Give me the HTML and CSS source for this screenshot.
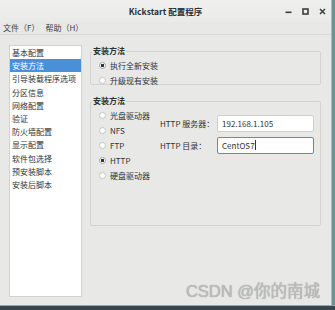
FILE: index.html
```html
<!DOCTYPE html>
<html lang="zh-CN">
<head>
<meta charset="utf-8">
<title>Kickstart 配置程序</title>
<link rel="stylesheet" href="styles.css">
</head>
<body>
<div class="desktop">
  <div class="window">
    <header class="titlebar">
      <span class="title">Kickstart 配置程序</span>
      <div class="controls">
        <span class="ctl"><svg width="7" height="7" viewBox="0 0 7 7"><rect x="0.5" y="3.5" width="6" height="1.6" fill="#3b3f41"/></svg></span>
        <span class="ctl"><svg width="7" height="7" viewBox="0 0 7 7"><rect x="1" y="1" width="5" height="5" fill="none" stroke="#3b3f41" stroke-width="1.6"/></svg></span>
        <span class="ctl"><svg width="7" height="7" viewBox="0 0 7 7"><path d="M1 1L6 6M6 1L1 6" stroke="#3b3f41" stroke-width="1.5"/></svg></span>
      </div>
    </header>
    <nav class="menubar">
      <span>文件（F）</span>
      <span>帮助（H）</span>
    </nav>
    <div class="content">
      <ul class="sidebar">
        <li>基本配置</li>
        <li class="selected">安装方法</li>
        <li>引导装载程序选项</li>
        <li>分区信息</li>
        <li>网络配置</li>
        <li>验证</li>
        <li>防火墙配置</li>
        <li>显示配置</li>
        <li>软件包选择</li>
        <li>预安装脚本</li>
        <li>安装后脚本</li>
      </ul>
      <div class="main">
        <fieldset class="frame frame-method">
          <legend>安装方法</legend>
          <div class="options">
            <div class="radio"><span class="mark checked"></span>执行全新安装</div>
            <div class="radio"><span class="mark"></span>升级现有安装</div>
          </div>
        </fieldset>
        <fieldset class="frame frame-source">
          <legend>安装方法</legend>
          <div class="source-body">
            <div class="radio-list">
              <div class="radio"><span class="mark"></span>光盘驱动器</div>
              <div class="radio"><span class="mark"></span>NFS</div>
              <div class="radio"><span class="mark"></span>FTP</div>
              <div class="radio"><span class="mark checked"></span>HTTP</div>
              <div class="radio"><span class="mark"></span>硬盘驱动器</div>
            </div>
            <div class="http-form">
              <span class="label">HTTP 服务器：</span>
              <span class="field">192.168.1.105</span>
              <span class="label">HTTP 目录：</span>
              <span class="field focused">CentOS7<span class="caret"></span></span>
            </div>
          </div>
        </fieldset>
      </div>
    </div>
    <div class="watermark">CSDN @你的南城</div>
  </div>
  <div class="edge-right"></div>
  <div class="taskbar"></div>
</div>
</body>
</html>
```

FILE: styles.css
```css
html, body {
  margin: 0;
  padding: 0;
}
body {
  width: 335px;
  height: 310px;
  overflow: hidden;
  font-family: "Noto Sans CJK SC", "Noto Sans", sans-serif;
  color: #2e3436;
}
.desktop {
  display: grid;
  grid-template-columns: 331px 4px;
  grid-template-rows: 305px 5px;
  width: 335px;
  height: 310px;
  background: #3b4a52;
}
.window {
  grid-column: 1;
  grid-row: 1;
  position: relative;
  display: flex;
  flex-direction: column;
  background: #e8e8e7;
  overflow: hidden;
}
.edge-right {
  grid-column: 2;
  grid-row: 1;
  background: #6b9393;
  border-left: 1px solid #a9bcbc;
}
.taskbar {
  grid-column: 1 / 3;
  grid-row: 2;
  background: #37464e;
  border-top: 1px solid #9aa5a9;
}

/* title bar */
.titlebar {
  height: 22px;
  flex: none;
  display: grid;
  grid-template-columns: 1fr auto 1fr;
  align-items: center;
  background: linear-gradient(#efefee, #eaeae9);
}
.title {
  grid-column: 2;
  font-size: 8.5px;
  font-weight: 700;
  line-height: 22px;
  color: #2e3436;
}
.controls {
  grid-column: 3;
  justify-self: end;
  display: flex;
}
.ctl {
  width: 17px;
  height: 22px;
  display: flex;
  align-items: center;
  justify-content: center;
}

/* menu */
.menubar {
  height: 13px;
  flex: none;
  box-sizing: border-box;
  display: flex;
  gap: 6px;
  padding-left: 3px;
  font-size: 8px;
  line-height: 12px;
  color: #3a3f41;
  border-bottom: 1px solid #dadad8;
  background: #e8e8e7;
}

/* content */
.content {
  flex: 1;
  display: flex;
  gap: 8px;
  padding: 10px 10px 8px 9px;
}
.sidebar {
  width: 73px;
  height: 252px;
  flex: none;
  box-sizing: border-box;
  margin: 0;
  padding: 0;
  list-style: none;
  background: #ffffff;
  border: 1px solid #d2d2cf;
  font-size: 8px;
  line-height: 13.2px;
  color: #2e3436;
}
.sidebar li {
  padding-left: 2px;
  white-space: nowrap;
}
.sidebar li.selected {
  background: #4a90d9;
  color: #ffffff;
}

.main {
  flex: 1;
  margin-top: 1px;
  display: flex;
  flex-direction: column;
  gap: 11px;
}
.frame {
  margin: 0;
  padding: 0;
  min-width: 0;
  box-sizing: border-box;
  border: 1px solid #d2d2cf;
  border-radius: 2px;
}
.frame legend {
  margin-left: 1px;
  padding: 0 1px;
  font-size: 8px;
  font-weight: 700;
  line-height: 10px;
  color: #2e3436;
}
.frame-method {
  height: 39px;
}
.frame-source {
  height: 130px;
}
.options {
  padding: 1.5px 0 0 8px;
}
.radio {
  display: flex;
  align-items: center;
  gap: 4px;
  height: 15px;
  font-size: 8px;
  color: #2e3436;
  white-space: nowrap;
}
.mark {
  width: 7px;
  height: 7px;
  flex: none;
  box-sizing: border-box;
  border-radius: 50%;
  border: 1px solid #c3c3c0;
  background: #ffffff;
}
.mark.checked {
  border-color: #a4a4a1;
  background: radial-gradient(circle, #2e3436 0 1.4px, #ffffff 1.9px);
}

.source-body {
  display: flex;
  padding: 1.5px 0 0 8px;
}
.radio-list {
  width: 61px;
  flex: none;
}
.http-form {
  display: grid;
  grid-template-columns: 57px 97px;
  grid-auto-rows: 17px;
  row-gap: 5px;
  align-items: center;
  margin-top: 7px;
  font-size: 8px;
}
.label {
  white-space: nowrap;
  color: #2e3436;
}
.field {
  height: 17px;
  box-sizing: border-box;
  display: flex;
  align-items: center;
  padding-left: 4px;
  background: #ffffff;
  border: 1px solid #cfcfcc;
  border-radius: 2px;
  color: #2e3436;
}
.field.focused {
  border-color: #4a90d9;
}
.caret {
  display: inline-block;
  width: 1px;
  height: 10px;
  margin-left: 0.5px;
  background: #2e3436;
}

.watermark {
  position: absolute;
  right: 11px;
  bottom: 6px;
  font-family: "Liberation Sans", "Noto Sans CJK SC", sans-serif;
  font-size: 16.5px;
  line-height: 1;
  color: #bdbdbd;
  text-shadow: 0 0 1px rgba(0, 0, 0, 0.35);
  white-space: nowrap;
}
```
